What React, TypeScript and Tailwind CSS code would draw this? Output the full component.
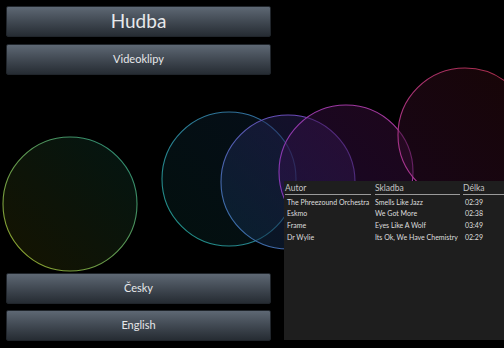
import React from "react";

const circles = [
  { cx: 70, cy: 204, s1: "#98a626", s2: "#22887a", f1: "#2a2600", f2: "#062a24" },
  { cx: 229, cy: 179, s1: "#1f9484", s2: "#3466a0", f1: "#06201c", f2: "#0a1a30" },
  { cx: 288, cy: 182, s1: "#3276a6", s2: "#7a3cbc", f1: "#0c3048", f2: "#301a58" },
  { cx: 346, cy: 172, s1: "#7c38bc", s2: "#a83696", f1: "#2c1050", f2: "#3a0c34" },
  { cx: 465, cy: 135, s1: "#a8369e", s2: "#a82c40", f1: "#300c30", f2: "#2e0a0a" },
];

const rows = [
  ["The Phreezound Orchestra", "Smells Like Jazz", "02:39"],
  ["Eskmo", "We Got More", "02:38"],
  ["Frame", "Eyes Like A Wolf", "03:49"],
  ["Dr Wylie", "Its Ok, We Have Chemistry", "02:29"],
];

function Btn({ children, big }: { children: React.ReactNode; big?: boolean }) {
  return (
    <div
      className={`h-[31px] w-[265px] rounded-[2px] flex items-center justify-center text-[#e6e8ea] bg-gradient-to-b from-[#5e6874] to-[#262c33] border border-[#20252b] ${
        big ? "text-[19px]" : "text-[11px]"
      }`}
    >
      {children}
    </div>
  );
}

export default function App() {
  return (
    <div
      className="relative w-[504px] h-[348px] bg-black overflow-hidden"
      style={{ fontFamily: 'Lato, "Noto Sans", sans-serif' }}
    >
      <svg className="absolute inset-0" width="504" height="348">
        <defs>
          {circles.map((c, i) => (
            <React.Fragment key={i}>
              <linearGradient id={`s${i}`} x1="0" y1="1" x2="1" y2="0">
                <stop offset="0" stopColor={c.s1} />
                <stop offset="1" stopColor={c.s2} />
              </linearGradient>
              <linearGradient id={`f${i}`} x1="0" y1="1" x2="1" y2="0">
                <stop offset="0" stopColor={c.f1} />
                <stop offset="1" stopColor={c.f2} />
              </linearGradient>
            </React.Fragment>
          ))}
        </defs>
        {circles.map((c, i) => (
          <circle
            key={i}
            cx={c.cx}
            cy={c.cy}
            r={67}
            fill={`url(#f${i})`}
            fillOpacity={0.5}
            stroke={`url(#s${i})`}
            strokeWidth={1.1}
          />
        ))}
      </svg>
      <div className="relative flex h-full">
        <div className="flex flex-col justify-between pl-[6px] pt-[6px] pb-[7px]">
          <div className="flex flex-col gap-[7px]">
            <Btn big>Hudba</Btn>
            <Btn>Videoklipy</Btn>
          </div>
          <div className="flex flex-col gap-[6px]">
            <Btn>Česky</Btn>
            <Btn>English</Btn>
          </div>
        </div>
        <div className="ml-[13px] mt-[181px] mb-[8px] flex-1 bg-[#1e1e1e] pt-[2px]">
          <div className="flex text-[8.5px] text-[#c4c4c4] leading-[10px]">
            <div className="w-[86px] ml-[1px] border-b border-[#9a9a9a] pb-[1px]">Autor</div>
            <div className="w-[85px] ml-[4px] border-b border-[#9a9a9a] pb-[1px]">Skladba</div>
            <div className="flex-1 ml-[3px] border-b border-[#9a9a9a] pb-[1px]">Délka</div>
          </div>
          <div className="pt-[1px] text-[7px] text-[#dedede]">
            {rows.map((r, i) => (
              <div key={i} className="flex h-[11.7px] items-center">
                <div className="w-[89px] pl-[3px] whitespace-nowrap overflow-hidden">{r[0]}</div>
                <div className="w-[90px] pl-[2px] whitespace-nowrap overflow-hidden">{r[1]}</div>
                <div className="flex-1 pl-[2px]">{r[2]}</div>
              </div>
            ))}
          </div>
        </div>
      </div>
    </div>
  );
}
